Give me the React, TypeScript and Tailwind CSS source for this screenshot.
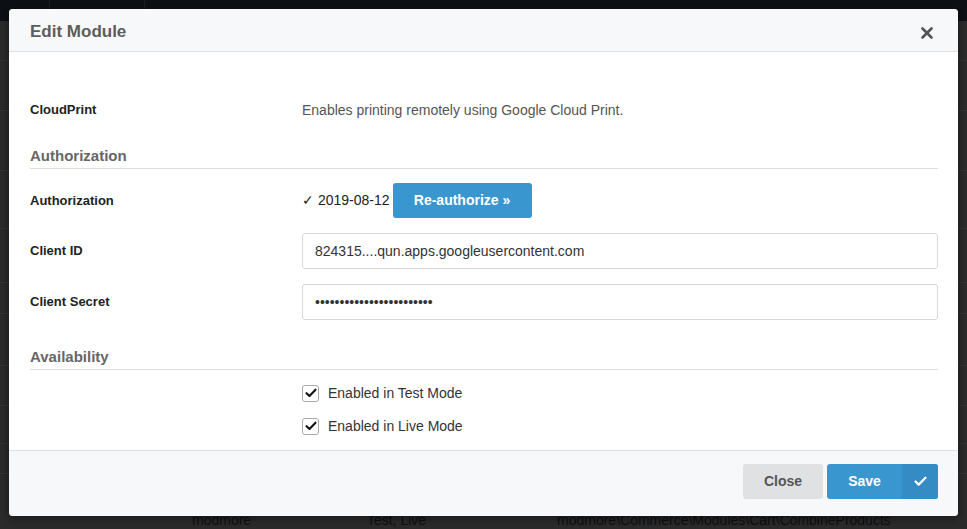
import { X, Check } from 'lucide-react';

const BG_ROWS = [60, 110, 170, 228, 282, 313, 365, 405, 443, 473];

function CheckBox() {
  return (
    <span className="flex h-[17px] w-[17px] items-center justify-center rounded-[3px] border border-[#a9a9a9] bg-white">
      <svg viewBox="0 0 16 16" className="h-[12px] w-[12px]">
        <path d="M2 8.2 L6 12 L14 3.6" fill="none" stroke="#111" strokeWidth="2.8" strokeLinecap="round" strokeLinejoin="round" />
      </svg>
    </span>
  );
}

export default function App() {
  return (
    <div className="relative h-[529px] w-[967px] overflow-hidden bg-[#2b2b2c] font-['Liberation_Sans',Arial,sans-serif]">
      {/* page behind the overlay */}
      <div className="flex h-[21px] bg-[#0d1014]">
        <div className="w-[50px] border-r border-[#1c1f23]" />
        <div className="w-[95px] border-r border-[#1c1f23]" />
      </div>
      {BG_ROWS.map(y => (
        <div key={y} className="absolute left-0 right-0 h-px bg-[#353536]" style={{ top: y }} />
      ))}
      <div className="absolute left-0 right-0 top-[512px] flex text-[14px] leading-[17px] text-[#0f0f10]">
        <span className="ml-[192px] w-[175px]">modmore</span>
        <span className="w-[190px]">Test, Live</span>
        <span>modmore\Commerce\Modules\Cart\CombineProducts</span>
      </div>

      {/* modal */}
      <div className="absolute left-[9px] top-[9px] w-[949px] overflow-hidden rounded-[4px] bg-white shadow-[0_2px_10px_rgba(0,0,0,0.5)]">
        <div className="flex h-[43px] items-center justify-between border-b border-[#dcdee1] bg-[#f7f8fa] pl-[21px] pr-[22px]">
          <h1 className="pt-[3px] text-[17px] font-bold text-[#5d5d5d]">Edit Module</h1>
          <X className="mt-[5px] h-[18px] w-[18px] text-[#555]" strokeWidth={3.6} />
        </div>

        <div className="h-[398px] pl-[21px] pr-[20px] pt-[40px] text-[14px]">
          <div className="flex h-[36px] items-center">
            <span className="w-[272px] text-[13px] font-bold text-[#222]">CloudPrint</span>
            <span className="text-[#555]">Enables printing remotely using Google Cloud Print.</span>
          </div>

          <div className="mt-[18px] border-b border-[#dedede] pb-[2px]">
            <h2 className="h-[20px] text-[15px] font-bold leading-[20px] text-[#666]">Authorization</h2>
          </div>

          <div className="mt-[14px] flex h-[35px] items-center">
            <span className="w-[272px] text-[13px] font-bold text-[#222]">Authorization</span>
            <span className="mr-[3px] text-[#222]">✓ 2019-08-12</span>
            <button className="h-[35px] w-[139px] rounded-[3px] bg-[#3a96cf] text-[14px] font-bold text-white">Re-authorize »</button>
          </div>

          <div className="mt-[15px] flex h-[36px] items-center">
            <span className="w-[272px] text-[13px] font-bold text-[#222]">Client ID</span>
            <div className="flex h-[36px] flex-1 items-center rounded-[3px] border border-[#d9d9d9] pl-[12px] text-[#333]">
              824315....qun.apps.googleusercontent.com
            </div>
          </div>

          <div className="mt-[15px] flex h-[36px] items-center">
            <span className="w-[272px] text-[13px] font-bold text-[#222]">Client Secret</span>
            <div className="flex h-[36px] flex-1 items-center rounded-[3px] border border-[#d9d9d9] pl-[12px] text-[14px] text-[#333]">
              ••••••••••••••••••••••••
            </div>
          </div>

          <div className="mt-[27px] border-b border-[#dedede] pb-[2px]">
            <h2 className="h-[20px] text-[15px] font-bold leading-[20px] text-[#666]">Availability</h2>
          </div>

          <div className="mt-[13px] flex flex-col gap-[13px] pl-[272px] text-[#333]">
            <label className="flex h-[20px] items-center gap-[9px]">
              <CheckBox />
              <span>Enabled in Test Mode</span>
            </label>
            <label className="flex h-[20px] items-center gap-[9px]">
              <CheckBox />
              <span>Enabled in Live Mode</span>
            </label>
          </div>
        </div>

        <div className="flex h-[66px] justify-end gap-[4px] border-t border-[#dcdee1] bg-[#f7f8fa] pr-[20px] pt-[13px]">
          <button className="h-[35px] w-[80px] rounded-[3px] bg-[#e0e1e3] text-[14px] font-bold text-[#555]">Close</button>
          <button className="flex h-[35px] w-[111px] overflow-hidden rounded-[3px] bg-[#3a96cf] text-[14px] font-bold text-white">
            <span className="flex h-full w-[75px] items-center justify-center">Save</span>
            <span className="flex h-full flex-1 items-center justify-center bg-[#358cc4]">
              <Check className="h-[15px] w-[15px]" strokeWidth={3.5} />
            </span>
          </button>
        </div>
      </div>
    </div>
  );
}
